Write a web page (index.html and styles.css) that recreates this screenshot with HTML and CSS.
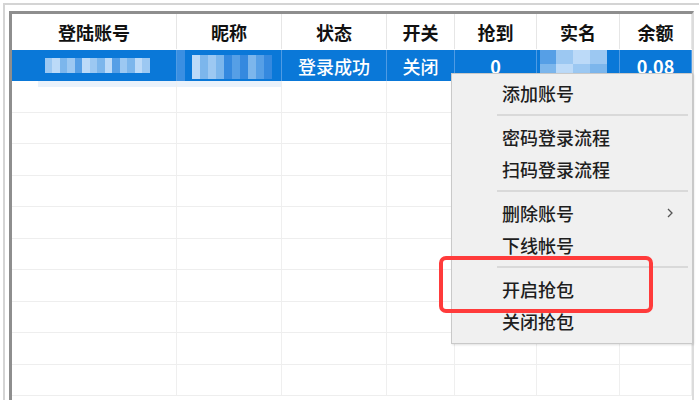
FILE: index.html
```html
<!DOCTYPE html>
<html lang="zh-CN">
<head>
<meta charset="utf-8">
<title>账号列表</title>
<link rel="stylesheet" href="styles.css">
</head>
<body>
<div class="screen">
  <div class="outer">
    <div class="inner">
      <div class="grid">
        <div class="row head">
          <div class="c">登陆账号</div>
          <div class="c">昵称</div>
          <div class="c">状态</div>
          <div class="c">开关</div>
          <div class="c">抢到</div>
          <div class="c">实名</div>
          <div class="c">余额</div>
        </div>
        <div class="row sel">
          <div class="c"><span class="mosaic m-acc"><i class="a"></i><i class="b"></i><i class="c2"></i><i class="a"></i><i class="d"></i><i class="b"></i><i class="a"></i><i class="c2"></i><i class="b"></i><i class="d"></i><i class="a"></i><i class="c2"></i><i class="b"></i><i class="a"></i></span></div>
          <div class="c c-nick"><span class="mosaic m-nick"><i class="b"></i><i class="c2"></i><i class="a"></i><i class="c2"></i><i class="e"></i><i class="d"></i><i class="e"></i><i class="c2"></i><i class="d"></i><i class="e"></i></span></div>
          <div class="c">登录成功</div>
          <div class="c">关闭</div>
          <div class="c num">0</div>
          <div class="c"><span class="mosaic m-real"><i class="d"></i><i class="a"></i><i class="b"></i><i class="a"></i><i class="c2"></i><i class="b"></i><i class="a"></i><i class="c2"></i></span></div>
          <div class="c num">0.08</div>
        </div>
        <div class="row first">
          <div class="c ghost"></div><div class="c ghost"></div><div class="c"></div><div class="c"></div><div class="c"></div><div class="c"></div><div class="c"></div>
        </div>
        <div class="row"><div class="c"></div><div class="c"></div><div class="c"></div><div class="c"></div><div class="c"></div><div class="c"></div><div class="c"></div></div>
        <div class="row"><div class="c"></div><div class="c"></div><div class="c"></div><div class="c"></div><div class="c"></div><div class="c"></div><div class="c"></div></div>
        <div class="row"><div class="c"></div><div class="c"></div><div class="c"></div><div class="c"></div><div class="c"></div><div class="c"></div><div class="c"></div></div>
        <div class="row"><div class="c"></div><div class="c"></div><div class="c"></div><div class="c"></div><div class="c"></div><div class="c"></div><div class="c"></div></div>
        <div class="row"><div class="c"></div><div class="c"></div><div class="c"></div><div class="c"></div><div class="c"></div><div class="c"></div><div class="c"></div></div>
        <div class="row"><div class="c"></div><div class="c"></div><div class="c"></div><div class="c"></div><div class="c"></div><div class="c"></div><div class="c"></div></div>
        <div class="row"><div class="c"></div><div class="c"></div><div class="c"></div><div class="c"></div><div class="c"></div><div class="c"></div><div class="c"></div></div>
        <div class="row"><div class="c"></div><div class="c"></div><div class="c"></div><div class="c"></div><div class="c"></div><div class="c"></div><div class="c"></div></div>
        <div class="row"><div class="c"></div><div class="c"></div><div class="c"></div><div class="c"></div><div class="c"></div><div class="c"></div><div class="c"></div></div>
      </div>
    </div>
  </div>

  <div class="menu">
    <div class="item">添加账号</div>
    <div class="sep"></div>
    <div class="item">密码登录流程</div>
    <div class="item">扫码登录流程</div>
    <div class="sep"></div>
    <div class="item">删除账号<svg class="chev" width="8" height="12" viewBox="0 0 8 12"><path d="M2 2 L6 6 L2 10" fill="none" stroke="#555" stroke-width="1.3"/></svg></div>
    <div class="item">下线帐号</div>
    <div class="sep"></div>
    <div class="item">开启抢包</div>
    <div class="item">关闭抢包</div>
  </div>

  <div class="mark"></div>
</div>
</body>
</html>
```

FILE: styles.css
```css
* { box-sizing: border-box; }

html, body {
  margin: 0;
  padding: 0;
  background: #ffffff;
}

body {
  width: 699px;
  height: 400px;
  overflow: hidden;
  font-family: "Noto Sans CJK SC", "Microsoft YaHei", sans-serif;
  font-size: 18px;
  color: #1a1a1a;
}

.screen {
  position: relative;
  width: 699px;
  height: 400px;
  overflow: hidden;
  padding: 3px 0 0 3px;
}

.outer {
  border-top: 2px solid #d4d4d4;
  border-left: 2px solid #d4d4d4;
  padding: 6px 0 0 4px;
  height: 397px;
  overflow: hidden;
}

.inner {
  width: 685px;
  height: 389px;
  overflow: hidden;
  border-top: 3px solid #8e8e8e;
  border-left: 3px solid #8e8e8e;
  border-right: 2px solid #dcdcdc;
  background: #ffffff;
}

.grid {
  width: 680px;
}

.row {
  display: grid;
  grid-template-columns: 165px 105px 105px 68px 82px 83px 72px;
  height: 31.5px;
  border-bottom: 1px solid #eeeeee;
}

.c {
  display: flex;
  align-items: center;
  justify-content: center;
  border-right: 1px solid #efefef;
  white-space: nowrap;
}

.row.head {
  height: 36px;
  border-bottom: none;
  font-weight: 700;
  color: #111111;
  padding-bottom: 1px;
}

.row.head .c {
  border-right: 1px solid #e6e6e6;
}

.row.sel {
  height: 31px;
  border-bottom: none;
  background: #0a78d8;
  color: #ffffff;
  font-weight: 500;
}

.row.sel .c {
  border-right: 1px solid #4f9be4;
}

.row.sel .num {
  font-weight: 700;
}

.row.first .ghost {
  background: linear-gradient(#eaf2fb 0 6px, transparent 6px);
}

.row.first .ghost:first-child {
  background-position: 26px 0;
  background-repeat: no-repeat;
}

.c-nick {
  background: linear-gradient(90deg, #3a8fe2 0 8px, transparent 8px);
}

/* pixelated (blurred) values */
.mosaic {
  display: flex;
}

.mosaic i {
  display: block;
}

.mosaic .a { background: #9cc8f2; }
.mosaic .b { background: #bcdaf8; }
.mosaic .c2 { background: #7cb6ec; }
.mosaic .d { background: #569fe6; }
.mosaic .e { background: #3589df; }

.m-acc {
  width: 105px;
  height: 15px;
  margin-left: 6px;
}

.m-acc i { flex: 1; }

.m-nick {
  width: 80px;
  height: 24px;
  margin-left: 6px;
  margin-top: 2px;
}

.m-nick i { flex: 1; }

.m-real {
  width: 67px;
  height: 28px;
  margin-right: 10px;
  margin-top: -4px;
  background: #a8cff5;
  flex-wrap: wrap;
}

.m-real i { width: 25%; height: 50%; }

/* context menu */
.menu {
  position: absolute;
  left: 451px;
  top: 73px;
  width: 242px;
  height: 271px;
  background: #f0f0f0;
  border: 1px solid #c9c9c9;
  box-shadow: 1px 1px 2px rgba(0, 0, 0, 0.12);
  padding: 3px 4px 0 0;
}

.item {
  position: relative;
  height: 32px;
  display: flex;
  align-items: center;
  padding-left: 50px;
  font-size: 18px;
  font-weight: 500;
  color: #1e1e1e;
}

.chev {
  position: absolute;
  right: 14px;
  top: 10px;
}

.sep {
  height: 12px;
  margin-left: 45px;
  display: flex;
  align-items: center;
}

.sep::before {
  content: "";
  display: block;
  width: 100%;
  height: 2px;
  background: #d9d9d9;
}

/* red annotation box */
.mark {
  position: absolute;
  left: 439px;
  top: 256px;
  width: 214px;
  height: 57px;
  border: 4px solid #ff3b3b;
  border-radius: 7px;
}
```
